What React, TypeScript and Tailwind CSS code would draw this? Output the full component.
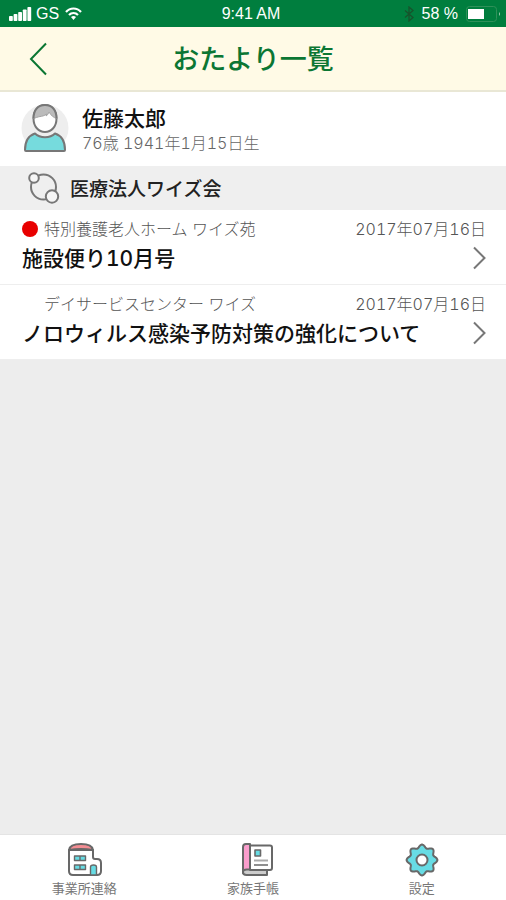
import type { ReactNode } from "react";

interface Letter {
  id: number;
  facility: string;
  date: string;
  title: string;
  unread: boolean;
}

const letters: Letter[] = [
  { id: 1, facility: "特別養護老人ホーム ワイズ苑", date: "2017年07月16日", title: "施設便り10月号", unread: true },
  { id: 2, facility: "デイサービスセンター ワイズ", date: "2017年07月16日", title: "ノロウィルス感染予防対策の強化について", unread: false },
];

// Eight rounded teeth around (18, 18)
const gearPoints = Array.from({ length: 120 }, (_, i) => {
  const angle = (i / 120) * Math.PI * 2;
  const radius = 13.8 + 1.6 * Math.cos(angle * 8);
  return `${(18 + radius * Math.cos(angle)).toFixed(2)},${(18 + radius * Math.sin(angle)).toFixed(2)}`;
}).join(" ");

function StatusBar() {
  return (
    <div className="grid h-[27px] grid-cols-3 items-center bg-[#007e3e] pr-1 pl-2 font-['Liberation_Sans',sans-serif] text-base text-white">
      <div className="flex items-center gap-1">
        <svg className="h-[14px] w-[24px]" viewBox="0 0 24 14" fill="currentColor" aria-hidden="true">
          <rect x="1" y="9" width="3.8" height="5" rx="0.8" />
          <rect x="5.6" y="7" width="3.8" height="7" rx="0.8" />
          <rect x="10.2" y="5" width="3.8" height="9" rx="0.8" />
          <rect x="14.8" y="2.5" width="3.8" height="11.5" rx="0.8" />
          <rect x="19.4" y="0" width="3.8" height="14" rx="0.8" />
        </svg>
        <span>GS</span>
        <svg className="ml-0.5 h-[13px] w-[17px]" viewBox="0 0 17 13" fill="none" stroke="currentColor" strokeWidth="2.2" aria-hidden="true">
          <path d="M1 5C5 .3 12 .3 16 5" />
          <path d="M4 8c2.600-2.700 6.400-2.700 9 0" />
          <path d="M6 10q2.500-2 5 0L8.500 13z" fill="currentColor" stroke="none" />
        </svg>
      </div>
      <span className="pr-2 text-center">9:41 AM</span>
      <div className="flex items-center justify-end">
        <svg className="mr-2 h-[16px] w-[10px] text-[#17532c]" viewBox="0 0 10 16" fill="none" stroke="currentColor" strokeWidth="1.3" aria-hidden="true">
          <path d="M1 4.500 9 11.500 5 15V1l4 3.500-8 7" />
        </svg>
        <span className="whitespace-nowrap">58 %</span>
        <svg className="ml-2 h-[16px] w-[36px]" viewBox="0 0 36 16" aria-hidden="true">
          <rect x=".5" y=".5" width="30" height="15" rx="3" fill="none" stroke="#2f9059" />
          <rect x="2" y="3" width="16" height="10" fill="#fff" />
          <path d="M33 6q2 2 0 4z" fill="#9fd0b2" />
        </svg>
      </div>
    </div>
  );
}

function PersonIcon() {
  return (
    <svg className="h-[50px] w-[48px] shrink-0" viewBox="0 0 48 50" stroke="#777" strokeWidth="2" strokeLinejoin="round" aria-hidden="true">
      <circle cx="24" cy="24" r="23.500" fill="#eee" stroke="none" />
      <path d="M4 46C4 37 8 31.500 14 29.500c5 5 15 5 20 0 6 2 10 7.500 10 16.500q0 1-1 1H5q-1 0-1-1z" fill="#76dbdd" />
      <path d="M12.500 14.500C12.500 6 17 1 24 1S35.500 6 35.500 14.500c0 8-5 13.500-11.500 13.500S12.500 22.500 12.500 14.500z" fill="#fff" />
      <path d="M12.500 14.500C12.500 6 17 1 24 1S35.500 6 35.500 14.500c-3-1-5.500-3-7.500-6.500q-1 3-3 4l.500-2c-3 3-7 2-10 3.500z" fill="#bbb" stroke="#a5a5a5" strokeWidth="1" />
      <path d="M12.500 14.500C12.500 6 17 1 24 1S35.500 6 35.500 14.500" fill="none" />
    </svg>
  );
}

function GroupIcon() {
  return (
    <svg className="h-[32px] w-[32px] shrink-0" viewBox="0 0 32 32" fill="none" stroke="#777" strokeWidth="2" aria-hidden="true">
      <circle cx="15.500" cy="15" r="12.500" />
      <circle cx="6" cy="6" r="4.800" fill="#f6f6f6" />
      <circle cx="24" cy="24.500" r="6.200" fill="#f6f6f6" />
    </svg>
  );
}

function LetterRow({ letter }: { letter: Letter }) {
  return (
    <li className="border-b border-[#eee]">
      <a href={`#letter-${letter.id}`} className="block pt-2 pr-5 pb-3 pl-[22px]">
        <div className="flex h-[22px] items-center justify-between text-base font-light whitespace-nowrap text-[#555]">
          <div className="flex items-center">
            <span
              className={["mr-1.5 h-4 w-4 rounded-full", letter.unread ? "bg-[#e80000]" : "bg-transparent"].join(" ")}
              role={letter.unread ? "img" : undefined}
              aria-label={letter.unread ? "未読" : undefined}
            />
            <span>{letter.facility}</span>
          </div>
          <time className="tabular-nums">{letter.date}</time>
        </div>
        <div className="flex h-8 items-center justify-between pt-1">
          <h2 className="pt-0.5 text-[21px] font-medium whitespace-nowrap text-[#111] tabular-nums">{letter.title}</h2>
          <svg className="h-[24px] w-[13px]" viewBox="0 0 13 24" fill="none" stroke="#777" strokeWidth="2" aria-hidden="true">
            <path d="M1 1.500 11.500 12 1 22.500" />
          </svg>
        </div>
      </a>
    </li>
  );
}

function OfficeIcon() {
  return (
    <svg className="h-[36px] w-[38px]" viewBox="0 0 38 36" fill="#fff" stroke="#686868" strokeWidth="2" strokeLinejoin="round" aria-hidden="true">
      <path d="M4 8v21q0 4 4 4h24q4 0 4-4v-8q0-4-4-4h-2q-2 0-2-2V8z" />
      <path d="M4 8c.500-4 4-6 12-6s11.500 2 12 6q-12-2-24 0z" fill="#f38d93" />
      <g fill="#67dce4" strokeWidth="1.400">
        <path d="M9.500 14h5.500v4.500H9.500zM15 14h5.500v4.500H15zM9.500 23h5.500v4.500H9.500zM15 23h5.500v4.500H15z" />
        <path d="M25.500 33v-8q0-2 3-2t3 2v8z" />
      </g>
    </svg>
  );
}

function NotebookIcon() {
  return (
    <svg className="h-[36px] w-[40px]" viewBox="0 0 40 36" fill="none" stroke="#686868" strokeWidth="2" strokeLinejoin="round" aria-hidden="true">
      <path d="M10 30V5q0-3 3-3h4v26h-3q-4 0-4 3z" fill="#fa9dcc" />
      <path d="M17 27.500h17V33H13.500q-3.500 0-3.500-2.800t4-2.700z" fill="#ccc" />
      <path d="M17 3.500h20q2 0 2 2V26q0 2-2 2H17z" fill="#fff" />
      <path d="M22 8h5.500v6H22z" fill="#67dce4" strokeWidth="1.600" />
      <path d="M21 18.500h14" stroke="#aaa" />
      <path d="M21 23h14" strokeWidth="1.500" />
    </svg>
  );
}

function GearIcon() {
  return (
    <svg className="h-[36px] w-[36px]" viewBox="0 0 36 36" fill="#67dce4" stroke="#686868" strokeWidth="2" strokeLinejoin="round" aria-hidden="true">
      <polygon points={gearPoints} />
      <circle cx="18" cy="18" r="5.500" fill="#fff" />
    </svg>
  );
}

function Tab({ label, icon }: { label: string; icon: ReactNode }) {
  return (
    <button type="button" className="flex flex-1 flex-col items-center pt-[7px] text-[13px] leading-5 text-[#777]">
      {icon}
      <span>{label}</span>
    </button>
  );
}

export default function App() {
  return (
    <div lang="ja" className="flex min-h-screen flex-col bg-[#ededed] font-['Inter','Noto_Sans_CJK_JP',sans-serif]">
      <StatusBar />
      <header className="grid h-[65px] grid-cols-[1fr_auto_1fr] items-center border-b-2 border-[#e9e7d5] bg-[#fffae6] text-[#0b7633]">
        <button type="button" aria-label="戻る" className="ml-7 w-fit">
          <svg className="h-[34px] w-[20px]" viewBox="0 0 20 34" fill="none" stroke="currentColor" strokeWidth="2" aria-hidden="true">
            <path d="M18 1.500 3 17l15 15.500" />
          </svg>
        </button>
        <h1 className="pt-1 text-[27px] font-medium">おたより一覧</h1>
      </header>

      <section className="flex h-[74px] items-center gap-[13px] bg-white pl-[21px]">
        <PersonIcon />
        <div className="pt-1">
          <p className="text-[21px] leading-6 font-medium text-[#111]">佐藤太郎</p>
          <p className="text-base leading-6 font-light text-[#666] tabular-nums">76歳 1941年1月15日生</p>
        </div>
      </section>

      <div className="flex h-11 items-center gap-2.5 bg-[#efefef] pl-7">
        <GroupIcon />
        <p className="pt-1 text-[19px] font-medium text-[#222]">医療法人ワイズ会</p>
      </div>

      <main className="flex-1">
        <ul className="bg-white">
          {letters.map((letter) => (
            <LetterRow key={letter.id} letter={letter} />
          ))}
        </ul>
      </main>

      <nav className="flex h-[66px] items-start border-t border-[#e4e4e4] bg-white">
        <Tab label="事業所連絡" icon={<OfficeIcon />} />
        <Tab label="家族手帳" icon={<NotebookIcon />} />
        <Tab label="設定" icon={<GearIcon />} />
      </nav>
    </div>
  );
}
